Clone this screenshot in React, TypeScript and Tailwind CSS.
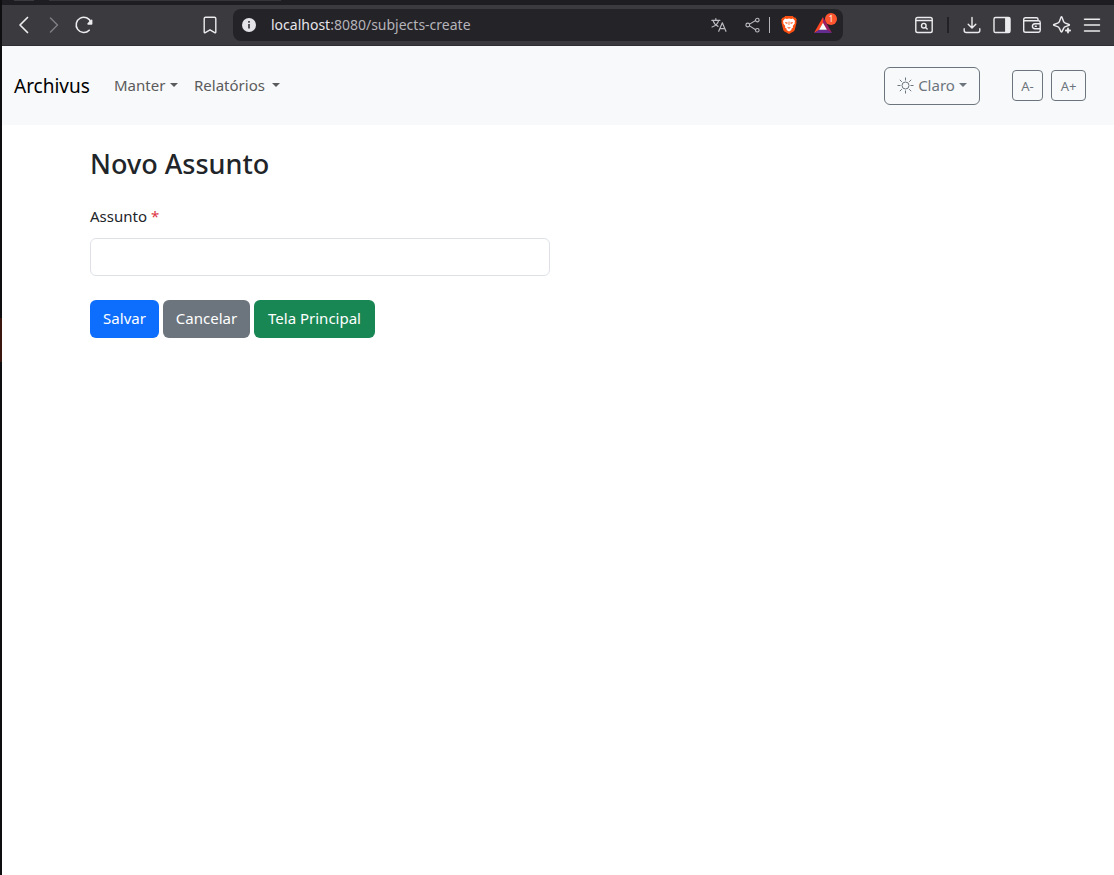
import type { ReactNode } from "react";

type IconProps = { size?: number; children: ReactNode; className?: string };

function Icon({ size = 20, children, className = "" }: IconProps) {
  return (
    <svg
      width={size}
      height={size}
      viewBox="0 0 20 20"
      fill="none"
      stroke="currentColor"
      strokeWidth="1.4"
      strokeLinecap="round"
      strokeLinejoin="round"
      className={className}
      aria-hidden="true"
    >
      {children}
    </svg>
  );
}

function ToolButton({ label, children, dim = false }: { label: string; children: ReactNode; dim?: boolean }) {
  return (
    <button
      type="button"
      aria-label={label}
      className={`flex h-8 w-[30px] shrink-0 items-center justify-center ${dim ? "text-[#7f7e84]" : "text-[#ececee]"}`}
    >
      {children}
    </button>
  );
}

function BraveLogo() {
  return (
    <svg width="20" height="20" viewBox="0 0 20 20" aria-hidden="true">
      <path
        d="M6.300 1h7.400l1.500 1.600 1.100-.1 1.500 1.900-.5 1.500.3 1.300-1.800 7.600c-.2.800-.7 1.300-1.300 1.700L10 19l-4.500-2.500c-.6-.4-1.100-.9-1.300-1.700L2.400 7.200l.3-1.300-.5-1.500 1.500-1.900 1.100.1z"
        fill="#fb5012"
      />
      <path
        d="M6 3.600l1.800.4L10 3.600l2.200.4 1.800-.4 2 2.400-.4 1.300.2 1-2 2.800.2 1.300-1.600 1.400v1.200L10 16.600l-2.400-1.600v-1.200L6 12.400l.2-1.300-2-2.800.2-1L4 6z"
        fill="#fff"
      />
      <path
        d="M5.800 7.200l2.900.4-.4 1.200-1.500-.2zM14.200 7.200l-2.900.4.4 1.200 1.500-.2zM9.600 6.500h.8v3.500h-.8zM8 11.800l2 .8 2-.8-1.200 1.500-.8.500-.8-.5z"
        fill="#fb5012"
      />
    </svg>
  );
}

function RewardsLogo() {
  return (
    <svg width="18" height="16" viewBox="0 0 18 16" aria-hidden="true">
      <path d="M9 0L0 16l5.200-3L9 6z" fill="#ff4724" />
      <path d="M9 0l9 16-5.200-3L9 6z" fill="#9e1f63" />
      <path d="M0 16h18l-5.200-3.200H5.200z" fill="#662d91" />
      <path d="M9 5.800l3.900 6.900H5.100z" fill="#fff" />
    </svg>
  );
}

function BrowserBar() {
  return (
    <header>
      <div className="flex h-[5px] items-start gap-[15px] bg-[#1e1d22] pl-3">
        <div className="h-px w-5 bg-[#3b3a3f]" />
        <div className="h-px w-[232px] bg-[#36353a]" />
      </div>
      <div className="flex h-[41px] items-center border-b border-[#2f2e33] bg-[#3b3a3f] px-[7px]">
        <ToolButton label="Voltar">
          <Icon>
            <path d="M13.500 2.500L6 10l7.500 7.500" strokeWidth="1.700" />
          </Icon>
        </ToolButton>
        <ToolButton label="Avançar" dim>
          <Icon>
            <path d="M6.500 3l7 7-7 7" strokeWidth="1.500" />
          </Icon>
        </ToolButton>
        <ToolButton label="Recarregar">
          <Icon>
            <path d="M15.200 15.200A7.600 7.600 0 1 1 17 7.500" strokeWidth="1.600" />
            <path d="M17.500 5.500v3.300h-3.300z" fill="currentColor" strokeWidth="1.800" />
          </Icon>
        </ToolButton>
        <div className="w-24 shrink-0" />
        <ToolButton label="Favoritos">
          <Icon>
            <path d="M4.200 3.600q0-1.400 1.400-1.400h8.800q1.400 0 1.400 1.400v13.600q-.2.900-1.100.4L10 14.800l-4.700 2.800q-.9.500-1.100-.4z" />
          </Icon>
        </ToolButton>
        <div className="ml-2 mr-[66px] flex h-8 flex-1 items-center rounded-lg bg-[#242328] pl-[9px]">
          <svg width="14" height="14" viewBox="0 0 14 14" aria-hidden="true">
            <circle cx="7" cy="7" r="7" fill="#e4e3e8" />
            <path d="M7 3v1.800M7 6v4.500" stroke="#3b3a3f" strokeWidth="1.700" />
          </svg>
          <p className="ml-[15px] flex-1 whitespace-nowrap text-sm leading-5 text-[#b5b4b9]">
            <span className="text-[#e6e5ea]">localhost</span>:8080/subjects-create
          </p>
          <button type="button" aria-label="Traduzir" className="text-[#bdbcc2]">
            <Icon size={18}>
              <path
                d="M2 4.800h9M6.500 3v1.800M3.300 4.800c1 3.200 3.500 5.700 5.700 6.700M9.600 4.800C8.800 8.500 5.500 11 2.300 12.300M9.700 17l4-9.500 4 9.500M11 14h5.400"
                strokeWidth="1.300"
              />
            </Icon>
          </button>
          <button type="button" aria-label="Compartilhar" className="ml-4 text-[#bdbcc2]">
            <Icon size={18}>
              <path d="M6.200 9l6.700-4M6.200 11l6.700 4.200" strokeWidth="1.200" />
              <circle cx="4.200" cy="10" r="2.100" strokeWidth="1.200" />
              <circle cx="14.800" cy="4.500" r="2" strokeWidth="1.200" />
              <circle cx="14.800" cy="15.800" r="2" strokeWidth="1.200" />
            </Icon>
          </button>
          <span className="ml-[7px] h-4 w-px bg-[#b5b4b9]" />
          <button type="button" aria-label="Brave Shields" className="ml-[9px]">
            <BraveLogo />
          </button>
          <button type="button" aria-label="Brave Rewards" className="relative ml-[15px] mr-[11px]">
            <RewardsLogo />
            <span className="absolute -right-[5px] -top-1 flex h-3 w-3 items-center justify-center rounded-full bg-[#ff5630] text-[8px] leading-3 text-white">
              1
            </span>
          </button>
        </div>
        <ToolButton label="Pesquisar abas">
          <Icon>
            <rect x="1.800" y="2.500" width="16.400" height="15" rx="1.800" />
            <path d="M2 5.500h16" />
            <circle cx="9.800" cy="10.700" r="2.300" />
            <path d="M11.600 12.500l1.600 1.600" />
          </Icon>
        </ToolButton>
        <span className="mx-2 h-4 w-0.5 bg-[#222126]" />
        <ToolButton label="Downloads">
          <Icon>
            <path d="M10 2.500v10M6.200 9.200l3.800 3.800 3.800-3.800M2.200 13.800v1.700q0 2 2 2h11.600q2 0 2-2v-1.700" />
          </Icon>
        </ToolButton>
        <ToolButton label="Barra lateral">
          <Icon>
            <rect x="2" y="2.500" width="16" height="15" rx="1.600" />
            <path d="M13.800 3h3.600v14h-3.600z" fill="currentColor" />
          </Icon>
        </ToolButton>
        <ToolButton label="Carteira">
          <Icon>
            <path d="M16 5.700V4.300q0-1.600-1.600-1.600H3.500q-1.800 0-1.800 1.800v11q0 1.800 1.800 1.800h13q1.700 0 1.700-1.700V7.400q0-1.700-1.700-1.700H2" />
            <path d="M18 8.800h-5q-2.600.2-2.600 2.500t2.600 2.500h5M13.300 11.300h1" />
          </Icon>
        </ToolButton>
        <ToolButton label="Assistente">
          <Icon>
            <path d="M9 2.200q.5-.8 1 0l1.600 4.200q.5 1.300 1.800 1.800l3.600 1.300q.9.400 0 .9l-3.600 1.200q-1.300.5-1.800 1.800L10 16.600q-.5.800-1 0l-1.600-3.200q-.5-1.300-1.800-1.800L2 10.400q-.9-.500 0-.9l3.600-1.300q1.300-.5 1.800-1.800z" />
            <path d="M16 13.400v4.200M13.900 15.500h4.200" strokeWidth="1.800" />
          </Icon>
        </ToolButton>
        <ToolButton label="Menu">
          <Icon>
            <path d="M2.500 4.200h15M2.500 10h15M2.500 16h15" strokeWidth="1.500" />
          </Icon>
        </ToolButton>
      </div>
    </header>
  );
}

function Caret() {
  return <span className="border-x-4 border-t-4 border-x-transparent border-t-current" aria-hidden="true" />;
}

function Navbar() {
  return (
    <nav className="flex items-center bg-[#f8f9fa] pb-5 pl-3 pr-7 pt-[21px]">
      <a href="#inicio" className="w-[76px] whitespace-nowrap text-[19px] leading-[30px] text-black">
        Archivus
      </a>
      <button type="button" className="ml-6 flex w-16 items-center justify-between whitespace-nowrap pb-0.5 text-[#5a5b5c]">
        Manter <Caret />
      </button>
      <button type="button" className="ml-4 flex w-[86px] items-center justify-between whitespace-nowrap pb-0.5 text-[#5a5b5c]">
        Relatórios <Caret />
      </button>
      <div className="ml-auto flex items-start text-[#6c757d]">
        <button
          type="button"
          className="flex h-[38px] w-24 items-center justify-between whitespace-nowrap rounded-md border border-[#6c757d] px-3 pb-0.5"
        >
          <svg
            width="17"
            height="17"
            viewBox="0 0 17 17"
            fill="none"
            stroke="currentColor"
            strokeWidth="1"
            aria-hidden="true"
          >
            <circle cx="8.500" cy="8.500" r="3.500" />
            <path d="M8.500 .5v3M8.500 13.500v3M.5 8.500h3M13.500 8.500h3M2.800 2.800l2 2M12.200 12.200l2 2M2.800 14.200l2-2M12.200 4.800l2-2" />
          </svg>
          Claro <Caret />
        </button>
        <div className="ml-8 flex gap-2 pt-[3px]">
          <button type="button" className="h-[31px] w-[31px] rounded border border-[#6c757d] text-[13px] leading-5">
            A-
          </button>
          <button type="button" className="h-[31px] w-[35px] rounded border border-[#6c757d] text-[13px] leading-5">
            A+
          </button>
        </div>
      </div>
    </nav>
  );
}

function SubjectForm() {
  return (
    <main className="mx-auto w-full max-w-[960px] px-3 pt-[22px]">
      <h1 className="mb-6 text-[27px] font-medium leading-[33px] text-[#212529]">Novo Assunto</h1>
      <form onSubmit={(event) => event.preventDefault()}>
        <div className="grid grid-cols-2 gap-4">
          <div>
            <label htmlFor="assunto" className="mb-[10px] block leading-6 text-[#212529]">
              Assunto <span className="text-[#dc3545]">*</span>
            </label>
            <input
              id="assunto"
              type="text"
              className="block h-[38px] w-full rounded-md border border-[#dee2e6] bg-white px-3 outline-none"
            />
          </div>
        </div>
        <div className="mt-6 flex gap-1 whitespace-nowrap text-white">
          <button type="submit" className="h-[38px] w-[69px] rounded-md bg-[#0d6efd] pb-0.5">
            Salvar
          </button>
          <button type="button" className="h-[38px] w-[87px] rounded-md bg-[#6c757d] pb-0.5">
            Cancelar
          </button>
          <button type="button" className="h-[38px] w-[121px] rounded-md bg-[#198754] pb-0.5">
            Tela Principal
          </button>
        </div>
      </form>
    </main>
  );
}

export default function App() {
  return (
    <div className="flex min-h-screen bg-white font-['Noto_Sans',sans-serif] text-[15px] leading-6">
      <div className="w-0.5 shrink-0 bg-[#0e0e11]">
        <div className="mt-[318px] h-11 bg-[#3a160f]" />
      </div>
      <div className="min-w-0 flex-1">
        <BrowserBar />
        <Navbar />
        <SubjectForm />
      </div>
    </div>
  );
}
